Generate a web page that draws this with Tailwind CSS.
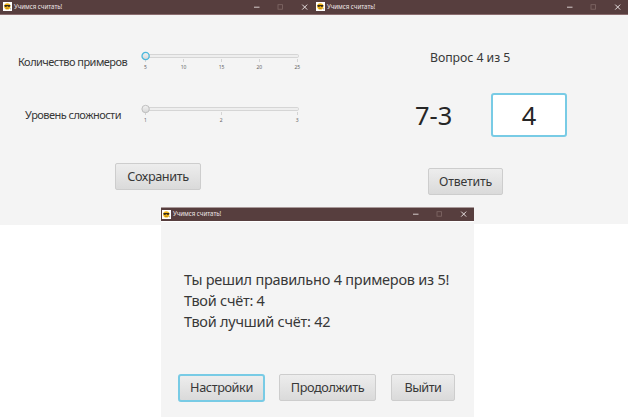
<!DOCTYPE html>
<html lang="ru">
<head>
<meta charset="utf-8">
<title>Учимся считать!</title>
<script src="https://cdn.jsdelivr.net/npm/@tailwindcss/browser@4"></script>
</head>
<body class="relative h-[417px] w-[628px] overflow-hidden bg-white font-['Noto_Sans','Open_Sans',sans-serif] text-[#383838]">
<svg class="hidden">
  <symbol id="face" viewBox="0 0 9 9">
    <rect width="9" height="9" fill="#fff"/>
    <circle cx="4.3" cy="4.4" r="3.1" fill="#f2b619"/>
    <path d="M1.4 3h5.9v1q-.4.9-1.5.9T4.4 4.1Q4 4.9 2.8 4.9T1.5 4Z" fill="#33291b"/>
    <path d="M3 6.1q1.3.7 2.6 0" stroke="#93610f" stroke-width=".6" fill="none"/>
    <circle cx="7.6" cy="6.8" r=".5" fill="#777"/>
  </symbol>
  <symbol id="controls" viewBox="0 0 56 8">
    <path d="M1 4.2h5.5" stroke="#d5cccb" stroke-width="1"/>
    <rect x="25" y="1.7" width="4.5" height="4.5" stroke="#806967" stroke-width=".8" fill="none"/>
    <path d="M49.2 1.6l5 5m0-5l-5 5" stroke="#e6dfdf" stroke-width="1"/>
  </symbol>
</svg>

<main class="flex items-start">
  <section class="h-[225px] w-[313px] shrink-0 bg-[#f4f4f4]">
    <header class="flex h-[15px] items-center border-b border-[#8a6c6e] bg-[#573e3e] pr-[4px] pb-px pl-[3px]">
      <svg class="h-[9px] w-[9px]"><use href="#face"/></svg>
      <span class="ml-[2px] text-[6.2px] leading-[12px] tracking-[-0.04px] whitespace-nowrap text-[#eee6e6]">Учимся считать!</span>
      <svg class="ml-auto h-[8px] w-[56px]"><use href="#controls"/></svg>
    </header>
    <div class="flex h-[51px] items-start pt-[37px] pl-[18px]">
      <label class="mt-[2px] w-[121px] text-[11px] leading-[16px] tracking-[-0.53px] whitespace-nowrap">Количество примеров</label>
      <svg class="-mt-[2px] h-[24px] w-[164px] shrink-0" viewBox="0 0 164 24">
        <defs><linearGradient id="thumb" x2="0" y2="1"><stop stop-color="#f3f3f3"/><stop offset="1" stop-color="#d6d6d6"/></linearGradient></defs>
        <rect x="3.5" y="4.5" width="156" height="3" rx="1.2" fill="#eee" stroke="#cecece" stroke-width=".8"/>
        <path d="M6.5 9v3M44.5 9v3M82.5 9v3M120.5 9v3M158.5 9v3" stroke="#c6c6c6" stroke-width=".7"/>
        <circle cx="6.6" cy="6" r="3.6" fill="url(#thumb)" stroke="#4bb8dc" stroke-width="1.3"/>
        <g font-size="5" text-anchor="middle" fill="#666"><text x="6.5" y="18.8">5</text><text x="44.5" y="18.8">10</text><text x="82.5" y="18.8">15</text><text x="120.3" y="18.8">20</text><text x="158.3" y="18.8">25</text></g>
      </svg>
    </div>
    <div class="flex h-[53px] items-start pt-[39px] pl-[25px]">
      <label class="mt-[2px] w-[114px] text-[11px] leading-[16px] tracking-[-0.53px] whitespace-nowrap">Уровень сложности</label>
      <svg class="-mt-[2px] h-[24px] w-[164px] shrink-0" viewBox="0 0 164 24">
        <rect x="3.5" y="4.5" width="156" height="3" rx="1.2" fill="#eee" stroke="#cecece" stroke-width=".8"/>
        <path d="M6.5 9v3M82.5 9v3M158.5 9v3" stroke="#c6c6c6" stroke-width=".7"/>
        <circle cx="6.6" cy="6" r="3.7" fill="url(#thumb)" stroke="#b9b9b9" stroke-width=".9"/>
        <g font-size="5" text-anchor="middle" fill="#666"><text x="6.5" y="18.8">1</text><text x="82.3" y="18.8">2</text><text x="158.2" y="18.8">3</text></g>
      </svg>
    </div>
    <button class="mt-[44px] ml-[115px] flex h-[27px] w-[86px] items-center justify-center rounded-[2px] border border-[#cdcdcd] bg-linear-to-b from-[#ededed] to-[#dadada] text-[12.7px] tracking-[-0.4px]"><span>Сохранить</span></button>
  </section>

  <section class="h-[224px] w-[315px] shrink-0 bg-[#f4f4f4]">
    <header class="flex h-[15px] items-center border-b border-[#8a6c6e] bg-[#573e3e] pr-[6px] pb-px pl-[3px]">
      <svg class="h-[9px] w-[9px]"><use href="#face"/></svg>
      <span class="ml-[2px] text-[6.2px] leading-[12px] tracking-[-0.04px] whitespace-nowrap text-[#eee6e6]">Учимся считать!</span>
      <svg class="ml-auto h-[8px] w-[56px]"><use href="#controls"/></svg>
    </header>
    <p class="mt-[34px] ml-[117px] text-[12.3px] leading-[18px] tracking-[-0.05px] whitespace-nowrap">Вопрос 4 из 5</p>
    <div class="mt-[26px] ml-[102px] flex items-center">
      <span class="w-[76px] text-[25.4px] leading-[36px] whitespace-nowrap text-[#262626]">7-3</span>
      <div class="flex h-[44px] w-[76px] items-center justify-center rounded-[3px] border-2 border-[#78cbe5] bg-white text-[25.4px] leading-[36px] text-[#262626]"><span>4</span></div>
    </div>
    <button class="mt-[31px] ml-[115px] flex h-[27px] w-[75px] items-center justify-center rounded-[2px] border border-[#cdcdcd] bg-linear-to-b from-[#ededed] to-[#dadada] pt-px text-[12.3px] tracking-[-0.2px]"><span>Ответить</span></button>
  </section>
</main>

<section class="absolute top-[207px] left-[161px] h-[210px] w-[313px] bg-[#f4f4f4]">
  <header class="flex h-[15px] items-center border-t border-b border-t-[#a99a9a] border-b-white bg-[#573e3e] pr-[6px] pb-px pl-[1px]">
    <svg class="h-[9px] w-[9px]"><use href="#face"/></svg>
    <span class="ml-[2px] text-[6.2px] leading-[12px] tracking-[-0.04px] whitespace-nowrap text-[#eee6e6]">Учимся считать!</span>
    <svg class="ml-auto h-[8px] w-[56px]"><use href="#controls"/></svg>
  </header>
  <div class="mt-[47px] ml-[23px] text-[14.5px] leading-[21px] tracking-[-0.23px] whitespace-nowrap">
    <p>Ты решил правильно 4 примеров из 5!</p>
    <p>Твой счёт: 4</p>
    <p>Твой лучший счёт: 42</p>
  </div>
  <div class="mt-[42px] ml-[17px] flex text-[12.7px] tracking-[-0.4px]">
    <button class="flex h-[28px] w-[87px] items-center justify-center rounded-[3px] border-2 border-[#78cbe5] bg-linear-to-b from-[#ededed] to-[#dadada]"><span>Настройки</span></button>
    <button class="ml-[14px] flex h-[27px] w-[97px] items-center justify-center rounded-[2px] border border-[#cdcdcd] bg-linear-to-b from-[#ededed] to-[#dadada]"><span>Продолжить</span></button>
    <button class="ml-[15px] flex h-[27px] w-[64px] items-center justify-center rounded-[2px] border border-[#cdcdcd] bg-linear-to-b from-[#ededed] to-[#dadada] tracking-[-0.55px]"><span>Выйти</span></button>
  </div>
</section>
</body>
</html>
